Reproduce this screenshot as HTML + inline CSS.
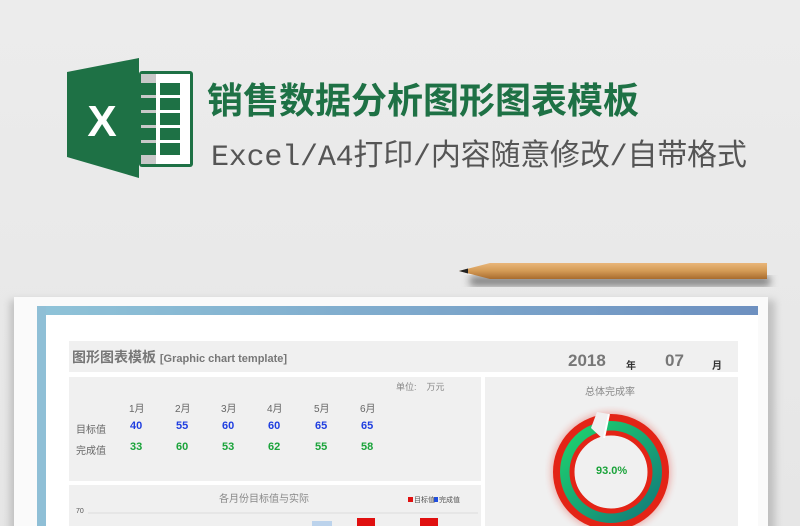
<!DOCTYPE html>
<html><head><meta charset="utf-8"><style>
*{margin:0;padding:0;box-sizing:border-box}
body{width:800px;height:526px;overflow:hidden;background:linear-gradient(#ececec,#e6e6e6);font-family:"Liberation Sans","Noto Sans CJK SC",sans-serif;position:relative}
.a{position:absolute}
.t{position:absolute;white-space:nowrap}
</style></head><body>
<svg class="a" style="left:0;top:0" width="800" height="526">
<defs>
<linearGradient id="bl" x1="0" x2="1"><stop offset="0" stop-color="#8fc3d8"/><stop offset="1" stop-color="#6d90c0"/></linearGradient>
<linearGradient id="gr" x1="0" x2="1" y1="0" y2="1"><stop offset="0" stop-color="#1ed46e"/><stop offset="1" stop-color="#137a7a"/></linearGradient>
<linearGradient id="pc" x1="0" y1="0" x2="0" y2="1"><stop offset="0" stop-color="#e9b67a"/><stop offset=".5" stop-color="#d39a55"/><stop offset="1" stop-color="#a86b2e"/></linearGradient>
<filter id="sh"><feGaussianBlur stdDeviation="4"/></filter>
</defs>
<rect x="139" y="71" width="54" height="96" rx="3" fill="#1e7145"/>
<rect x="141" y="74" width="49" height="90" fill="#fff"/>
<rect x="141" y="74" width="15" height="90" fill="#c8c8c8"/>
<g fill="#1e7145">
<rect x="141" y="83" width="15" height="12"/><rect x="160" y="83" width="20" height="12"/>
<rect x="141" y="98" width="15" height="12"/><rect x="160" y="98" width="20" height="12"/>
<rect x="141" y="113" width="15" height="12"/><rect x="160" y="113" width="20" height="12"/>
<rect x="141" y="128" width="15" height="12"/><rect x="160" y="128" width="20" height="12"/>
<rect x="141" y="143" width="15" height="12"/><rect x="160" y="143" width="20" height="12"/>
</g>
<polygon points="67,72 139,58 139,178 67,157" fill="#1e7145"/>
<text x="102" y="136" font-family="Liberation Sans" font-weight="bold" font-size="44" fill="#fff" text-anchor="middle">X</text>
<rect x="470" y="276" width="300" height="10" fill="#555" filter="url(#sh)" opacity=".7"/>
<polygon points="459,271 490,263 767,263 767,279 490,279" fill="url(#pc)"/>
<polygon points="459,271 468,268.5 468,273.5" fill="#222"/>
<rect x="10" y="300" width="765" height="240" fill="#999" filter="url(#sh)" opacity=".5"/>
<rect x="14" y="297" width="754" height="240" fill="#fafafa"/>
<rect x="37" y="306" width="721" height="9" fill="url(#bl)"/>
<rect x="37" y="306" width="9" height="230" fill="#8fbfd6"/>
<rect x="46" y="315" width="712" height="220" fill="#fff"/>
<rect x="69" y="341" width="669" height="31" fill="#f0f0f0"/>
<rect x="69" y="377" width="412" height="104" fill="#f0f0f0"/>
<rect x="485" y="377" width="253" height="160" fill="#f0f0f0"/>
<rect x="69" y="485" width="412" height="50" fill="#f0f0f0"/>
<line x1="88" y1="513" x2="478" y2="513" stroke="#ddd"/>
<rect x="312" y="521" width="20" height="10" fill="#bcd3ec"/>
<rect x="357" y="518" width="18" height="12" fill="#e01010"/>
<rect x="420" y="518" width="18" height="12" fill="#e01010"/>
<rect x="408" y="497" width="5" height="5" fill="#e01010"/>
<rect x="434" y="497" width="4" height="5" fill="#1f4ee0"/>
<circle cx="611" cy="472" r="55" fill="none" stroke="#e32416" stroke-width="8" opacity=".4" filter="url(#sh)"/>
<circle cx="611" cy="472" r="54" fill="none" stroke="#e32416" stroke-width="8"/>
<circle cx="611" cy="472" r="46" fill="none" stroke="url(#gr)" stroke-width="10"/>
<circle cx="611" cy="472" r="39" fill="none" stroke="#e32416" stroke-width="5"/>
<polygon points="597,412 609,414 604,440 591,428" fill="#f0f0f0"/>
<line x1="609" y1="414" x2="604" y2="438" stroke="#fff" stroke-width="2"/>
</svg>
<div class="t" style="left:207px;top:72px;font-size:36px;font-weight:bold;color:#1e7145;font-family:'Noto Sans CJK SC',sans-serif;letter-spacing:0px">销售数据分析图形图表模板</div>
<div class="t" style="left:211px;top:130px;font-size:30px;color:#555;font-family:'Liberation Mono','Noto Sans CJK SC',monospace;letter-spacing:-0.2px">Excel/A4打印/内容随意修改/自带格式</div>
<div class="t" style="left:72px;top:347px;font-size:14px;font-weight:bold;color:#777">图形图表模板 <span style="font-size:11px">[Graphic chart template]</span></div>
<div class="t" style="left:568px;top:351px;font-size:17px;font-weight:bold;color:#777">2018</div>
<div class="t" style="left:626px;top:357px;font-size:10px;font-weight:bold;color:#333">年</div>
<div class="t" style="left:665px;top:351px;font-size:17px;font-weight:bold;color:#777">07</div>
<div class="t" style="left:712px;top:357px;font-size:10px;font-weight:bold;color:#333">月</div>
<div class="t" style="left:396px;top:380px;font-size:9px;color:#888">单位:&nbsp;&nbsp;&nbsp; 万元</div>
<div class="t" style="left:0;top:400px;font-size:10px;color:#666">
<span class="t" style="left:129px">1月</span><span class="t" style="left:175px">2月</span><span class="t" style="left:221px">3月</span><span class="t" style="left:267px">4月</span><span class="t" style="left:314px">5月</span><span class="t" style="left:360px">6月</span></div>
<div class="t" style="left:76px;top:421px;font-size:10px;color:#666">目标值</div>
<div class="t" style="left:76px;top:442px;font-size:10px;color:#666">完成值</div>
<div class="t" style="left:0;top:420px;font-size:11px;font-weight:bold;color:#1f3ee0">
<span class="t" style="left:130px">40</span><span class="t" style="left:176px">55</span><span class="t" style="left:222px">60</span><span class="t" style="left:268px">60</span><span class="t" style="left:315px">65</span><span class="t" style="left:361px">65</span></div>
<div class="t" style="left:0;top:441px;font-size:11px;font-weight:bold;color:#1aa33a">
<span class="t" style="left:130px">33</span><span class="t" style="left:176px">60</span><span class="t" style="left:222px">53</span><span class="t" style="left:268px">62</span><span class="t" style="left:315px">55</span><span class="t" style="left:361px">58</span></div>
<div class="t" style="left:585px;top:383px;font-size:10px;color:#888">总体完成率</div>
<div class="t" style="left:596px;top:465px;font-size:11px;font-weight:bold;color:#1aa33a">93.0%</div>
<div class="t" style="left:219px;top:490px;font-size:10px;color:#888">各月份目标值与实际</div>
<div class="t" style="left:414px;top:495px;font-size:7px;color:#555">目标值</div>
<div class="t" style="left:439px;top:495px;font-size:7px;color:#555">完成值</div>
<div class="t" style="left:76px;top:508px;font-size:7px;color:#555">70</div>
</body></html>
